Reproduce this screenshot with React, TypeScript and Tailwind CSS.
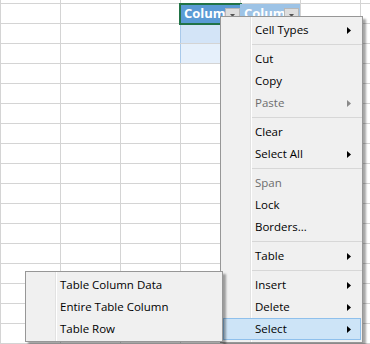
import React from "react";

const FONT = { fontFamily: '"Open Sans", "Noto Sans", sans-serif' };

function Arrow({ disabled }: { disabled?: boolean }) {
  return (
    <svg width="4" height="7" viewBox="0 0 4 7" className="ml-auto mr-[9px]">
      <path d="M0 0L4 3.5L0 7Z" fill={disabled ? "#8a8a8a" : "#000"} />
    </svg>
  );
}

type Item = { label?: string; sep?: boolean; sub?: boolean; disabled?: boolean; hl?: boolean };

const items: Item[] = [
  { label: "Cell Types", sub: true },
  { sep: true },
  { label: "Cut" },
  { label: "Copy" },
  { label: "Paste", sub: true, disabled: true },
  { sep: true },
  { label: "Clear" },
  { label: "Select All", sub: true },
  { sep: true },
  { label: "Span", disabled: true },
  { label: "Lock" },
  { label: "Borders..." },
  { sep: true },
  { label: "Table", sub: true },
  { sep: true },
  { label: "Insert", sub: true },
  { label: "Delete", sub: true },
  { label: "Select", sub: true, hl: true },
];

function DropBtn() {
  return (
    <div className="absolute left-[44px] top-[4px] w-[15px] h-[13px] bg-[#dedede] border border-[#b8b8b8] flex items-end justify-center pb-[3px]">
      <svg width="5" height="3" viewBox="0 0 5 3">
        <path d="M0 0H5L2.5 3Z" fill="#555" />
      </svg>
    </div>
  );
}

function GridRow({ idx }: { idx: number }) {
  const cols = [0, 1, 2, 3, 4, 5, 6];
  return (
    <div className="flex h-[20px] shrink-0 border-t border-[#d4d4d4]">
      {cols.map((c) => {
        if (idx === 0 && c === 3) {
          return (
            <div key={c} className="relative w-[60px] shrink-0 border-l border-[#d4d4d4] bg-[#5b9bd5]">
              <div className="h-full pl-[3px] text-white font-bold text-[13px] leading-[18px] whitespace-nowrap">
                Colum
              </div>
              <DropBtn />
              <div className="absolute left-[-2px] top-[-1px] w-[63px] h-[22px] border-2 border-[#217346]" />
            </div>
          );
        }
        if (idx === 0 && c === 4) {
          return (
            <div key={c} className="relative w-[60px] shrink-0 bg-[#9dc3e6]">
              <div className="h-full pl-[4px] text-white font-bold text-[13px] leading-[18px] whitespace-nowrap">
                Colum
              </div>
              <DropBtn />
            </div>
          );
        }
        if ((idx === 1 || idx === 2) && c === 3) {
          return (
            <div
              key={c}
              className={`w-[60px] shrink-0 border-l border-[#a9c9ea] ${idx === 1 ? "bg-[#d3e4f7]" : "bg-[#e6f0fb]"}`}
            />
          );
        }
        return <div key={c} className="w-[60px] shrink-0 border-l border-[#d4d4d4]" />;
      })}
    </div>
  );
}

export default function App() {
  const rows = Array.from({ length: 18 }, (_, i) => i);
  return (
    <div className="relative w-[370px] h-[344px] overflow-hidden bg-white" style={FONT}>
      <div className="flex flex-col">
        <div className="flex h-[3px] shrink-0">
          {[0, 1, 2, 3, 4, 5, 6].map((c) => (
            <div key={c} className="w-[60px] shrink-0 border-l border-[#d4d4d4]" />
          ))}
        </div>
        {rows.map((r) => (
          <GridRow key={r} idx={r} />
        ))}
      </div>

      {/* main context menu */}
      <div className="absolute left-[220px] top-[16px] w-[143px] bg-[#f0f0f0] border border-[#979797] shadow-[3px_3px_2px_rgba(0,0,0,0.35)] pt-[2px] pb-[2px]">
        <div className="absolute left-[29px] top-0 bottom-0 w-[1px] bg-[#e2e2e2]" />
        <div className="absolute left-[30px] top-0 bottom-0 w-[1px] bg-white" />
        {items.map((it, i) =>
          it.sep ? (
            <div key={i} className="relative h-[7px] flex items-center pl-[31px]">
              <div className="w-full h-[1px] bg-[#d7d7d7]" />
            </div>
          ) : (
            <div
              key={i}
              className={`relative flex items-center h-[22px] ml-[2px] mr-[1px] border ${
                it.hl ? "bg-[#cde4f7] border-[#8fc0ec]" : "border-transparent"
              }`}
            >
              <span
                className={`pl-[31px] text-[11.5px] ${it.disabled ? "text-[#6d6d6d]" : "text-black"}`}
              >
                {it.label}
              </span>
              {it.sub && <Arrow disabled={it.disabled} />}
            </div>
          )
        )}
      </div>

      {/* submenu */}
      <div className="absolute left-[25px] top-[271px] w-[198px] bg-[#f0f0f0] border border-[#979797] shadow-[3px_3px_2px_rgba(0,0,0,0.35)] pt-[2px] pb-[1px]">
        <div className="absolute left-[29px] top-0 bottom-0 w-[1px] bg-[#e2e2e2]" />
        <div className="absolute left-[30px] top-0 bottom-0 w-[1px] bg-white" />
        {["Table Column Data", "Entire Table Column", "Table Row"].map((t) => (
          <div key={t} className="relative flex items-center h-[22px] ml-[2px] mr-[1px] border border-transparent">
            <span className="pl-[31px] text-[11.5px] text-black">{t}</span>
          </div>
        ))}
      </div>
    </div>
  );
}
